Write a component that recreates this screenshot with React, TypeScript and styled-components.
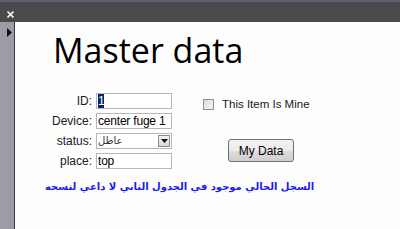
import styled, { createGlobalStyle } from "styled-components";

const GlobalStyle = createGlobalStyle`
    html, body {
        margin: 0;
        padding: 0;
        background: #fdfdfd;
    }
    body {
        font-family: Arial, "Liberation Sans", sans-serif;
    }
`

const rows = [
    {label: 'ID:', value: '1', selected: true},
    {label: 'Device:', value: 'center fuge 1'},
    {label: 'status:', value: 'عاطل', select: true},
    {label: 'place:', value: 'top'},
]

export default function App() {
    return (<Page>
        <GlobalStyle/>
        <TopBar>
            <CloseIcon>
                <svg width="7" height="7" viewBox="0 0 7 7">
                    <path d="M0.5 0.5L6.5 6.5M6.5 0.5L0.5 6.5" stroke="#f0f0f0" strokeWidth="1.6"/>
                </svg>
            </CloseIcon>
        </TopBar>
        <Body>
            <SideStrip>
                <svg width="5" height="9" viewBox="0 0 5 9">
                    <path d="M0 0L5 4.5L0 9Z" fill="#111"/>
                </svg>
            </SideStrip>
            <Content>
                <Title>Master data</Title>
                <FormRow>
                    <FormGrid>
                        {rows.map(r => (<>
                            <Label key={r.label + 'l'}>{r.label}</Label>
                            {r.select
                                ? <SelectBox key={r.label + 's'}>
                                    <SelectText>{r.value}</SelectText>
                                    <SelectArrow>
                                        <svg width="7" height="4" viewBox="0 0 7 4">
                                            <path d="M0 0H7L3.5 4Z" fill="#111"/>
                                        </svg>
                                    </SelectArrow>
                                </SelectBox>
                                : <InputBox key={r.label + 'i'}>
                                    {r.selected ? <Selected>{r.value}</Selected> : r.value}
                                </InputBox>}
                        </>))}
                    </FormGrid>
                    <SideColumn>
                        <CheckRow>
                            <CheckBox/>
                            <CheckLabel>This Item Is Mine</CheckLabel>
                        </CheckRow>
                        <Button>My Data</Button>
                    </SideColumn>
                </FormRow>
                <Notice dir="rtl">السجل الحالي موجود في الجدول الثاني لا داعي لنسخه</Notice>
            </Content>
        </Body>
    </Page>)
}

const Page = styled.div`
    width: 400px;
    height: 229px;
    display: flex;
    flex-direction: column;
    overflow: hidden;
`

const TopBar = styled.div`
    height: 20px;
    border-top: 2px solid #5d6272;
    background-color: #4a4a4a;
    display: flex;
    align-items: center;
    padding-left: 7px;
`

const CloseIcon = styled.div`
    display: flex;
    margin-top: 4px;
`

const Body = styled.div`
    flex: 1;
    display: flex;
`

const SideStrip = styled.div`
    width: 15px;
    box-sizing: border-box;
    background-color: #9c9ca6;
    border-right: 1px solid #3a3a3a;
    padding: 1px 0 0 7px;
`

const Content = styled.div`
    flex: 1;
    background-color: #fdfdfd;
    display: flex;
    flex-direction: column;
    align-items: flex-start;
`

const Title = styled.h1`
    margin: 6px 0 0 38px;
    font-family: "Open Sans", sans-serif;
    font-weight: 400;
    font-size: 34px;
    line-height: 44px;
    color: #000;
`

const FormRow = styled.div`
    display: flex;
    margin-top: 21px;
`

const FormGrid = styled.div`
    display: grid;
    grid-template-columns: 81px 76px;
    row-gap: 4px;
    align-items: center;
`

const Label = styled.span`
    font-size: 12px;
    color: #1a1a1a;
    text-align: right;
    padding-right: 4px;
`

const InputBox = styled.div`
    height: 16px;
    box-sizing: border-box;
    border: 1px solid #b7b7b7;
    background: #fff;
    font-size: 12px;
    letter-spacing: -0.2px;
    line-height: 14px;
    padding-left: 1px;
    color: #000;
    white-space: nowrap;
    overflow: hidden;
`

const Selected = styled.span`
    background: #0a246a;
    color: #fff;
`

const SelectBox = styled(InputBox)`
    display: flex;
    justify-content: space-between;
    padding-right: 1px;
    align-items: center;
`

const SelectText = styled.span`
    font-family: "DejaVu Sans", sans-serif;
    font-size: 10px;
    color: #333;
`

const SelectArrow = styled.span`
    width: 12px;
    height: 12px;
    box-sizing: border-box;
    border: 1px solid #8a8a8a;
    background: linear-gradient(#f4f4f4, #d8d8d8);
    display: flex;
    align-items: center;
    justify-content: center;
`

const SideColumn = styled.div`
    display: flex;
    flex-direction: column;
    margin-left: 31px;
    padding-top: 5px;
`

const CheckRow = styled.div`
    display: flex;
    align-items: center;
    gap: 8px;
`

const CheckBox = styled.span`
    width: 11px;
    height: 11px;
    box-sizing: border-box;
    border: 1px solid #8e8f8f;
    background: linear-gradient(135deg, #dcdcdc, #f6f6f6);
`

const CheckLabel = styled.span`
    font-size: 11.5px;
    color: #1a1a1a;
`

const Button = styled.button`
    margin: 29px 0 0 25px;
    width: 66px;
    height: 23px;
    box-sizing: border-box;
    border: 1px solid #707070;
    border-radius: 3px;
    background: linear-gradient(#f2f2f2 0%, #ebebeb 50%, #dddddd 51%, #cfcfcf 100%);
    font-family: Arial, "Liberation Sans", sans-serif;
    font-size: 12px;
    color: #000;
    padding: 0;
`

const Notice = styled.div`
    margin: 12px 0 0 30px;
    white-space: nowrap;
    font-family: "DejaVu Sans", sans-serif;
    font-weight: 700;
    font-size: 10px;
    color: #1c1cf0;
`
